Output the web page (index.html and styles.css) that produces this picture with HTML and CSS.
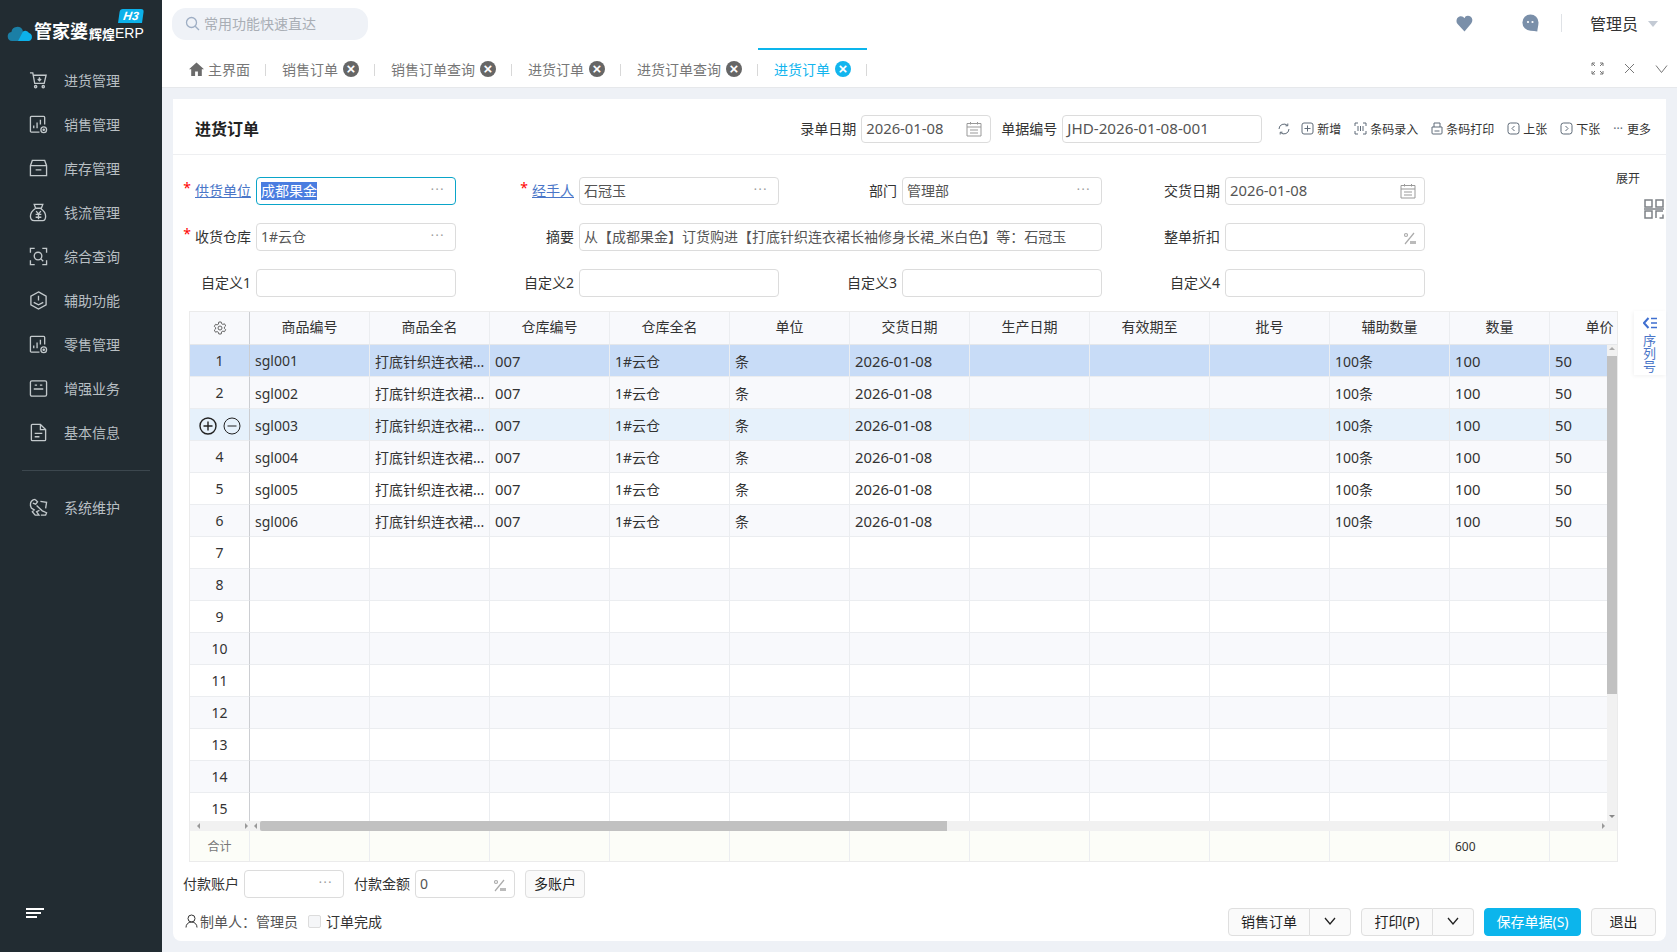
FILE: index.html
```html
<!DOCTYPE html>
<html lang="zh">
<head>
    <meta charset="utf-8">
    <title>进货订单</title>
    <link rel="stylesheet" href="styles.css">
</head>
<body>
<div class="app">
    <aside class="sidebar">
        <div class="logo">
            <svg class="logo-cloud" width="26" height="17" viewBox="0 0 26 17"><path fill="#1b7fa6" d="M5 17a4.6 4.6 0 0 1-.6-9.1A6 6 0 0 1 15.6 6l2 11z"/><path fill="#0cb1ea" d="M11 17l5-9.5a4.2 4.2 0 0 1 6 1.500A4.200 4.200 0 0 1 22 17z"/></svg>
            <span class="logo-name">管家婆</span>
            <span class="logo-sub">辉煌</span>
            <span class="logo-erp">ERP</span>
            <span class="logo-badge">H3</span>
        </div>
        <ul class="menu">
            <li><svg viewBox="0 0 20 20"><path d="M1 2h3l2 11h10l2-8.500H5"/><path d="M11 6.500v3.500M9.200 8.500l1.800 1.800 1.800-1.800"/><circle cx="7" cy="16.500" r="1.200"/><circle cx="15" cy="16.500" r="1.200"/></svg>进货管理</li>
            <li><svg viewBox="0 0 20 20"><path d="M11 18H2.500a1 1 0 0 1-1-1V2.500a1 1 0 0 1 1-1h13a1 1 0 0 1 1 1V10"/><path d="M5 14v-3M8.500 14V8M12 10V5"/><circle cx="15.500" cy="15.500" r="3"/><circle cx="15.500" cy="15.500" r=".7"/></svg>销售管理</li>
            <li><svg viewBox="0 0 20 20"><path d="M1.500 7l2-5.500h13l2 5.500v10.500h-17zM1.500 7h17M7 11.500h6"/></svg>库存管理</li>
            <li><svg viewBox="0 0 20 20"><path d="M7 5.500L5.500 1.500h9L13 5.500M7 5.500h6M7 5.500c-3 2-5.500 5.500-5.500 8.500 0 3 2 4.500 4 4.500h9c2 0 3-1.500 3-4.500 0-3-2.500-6.500-5.500-8.500"/><path d="M7.500 8.500l2.500 3 2.500-3M7 12h6M7 15h6M10 11.500V17"/></svg>钱流管理</li>
            <li><svg viewBox="0 0 20 20"><path d="M1.500 6V1.500H6M14 1.500h4.500V6M18.500 14v4.500H14M6 18.500H1.500V14"/><circle cx="9.500" cy="9.500" r="4"/><path d="M12.500 12.500l2.500 2.500"/></svg>综合查询</li>
            <li><svg viewBox="0 0 20 20"><path d="M10 1l8 4.500v9L10 19l-8-4.500v-9z"/><path d="M5 12l5 2.500 5-2.500M10 5v5"/></svg>辅助功能</li>
            <li><svg viewBox="0 0 20 20"><path d="M11 18H2.500a1 1 0 0 1-1-1V2.500a1 1 0 0 1 1-1h13a1 1 0 0 1 1 1V10"/><path d="M5 14v-3M8.500 14V8M12 10V5"/><circle cx="15.500" cy="15.500" r="3"/><circle cx="15.500" cy="15.500" r=".7"/></svg>零售管理</li>
            <li><svg viewBox="0 0 20 20"><rect x="1.500" y="2" width="17" height="16" rx="1.500"/><path d="M6 6.500h2.500M11.500 6.500H14M5 10.500h10"/></svg>增强业务</li>
            <li><svg viewBox="0 0 20 20"><path d="M12 1.500H3.500a1 1 0 0 0-1 1v15a1 1 0 0 0 1 1h13a1 1 0 0 0 1-1V7z"/><path d="M12 1.500V7h5.500M6 11h8M6 14.500h5"/></svg>基本信息</li>
        </ul>
        <div class="menu-line"></div>
        <ul class="menu">
            <li><svg viewBox="0 0 20 20"><path d="M6.500 1.500a5 5 0 0 0-4.800 6.200L1.500 8l1 2.500 3 2-2 2 3 3.500h4l-2.500-3.500 3-1.500"/><path d="M6.500 1.500L9 4 7 6.500 4 5.500M8 8l6 5.500 4.500 2-1 2.500h-5"/><path d="M12 3.500l6.500 1-1 6.500"/></svg>系统维护</li>
        </ul>
        <div class="menu-toggle"><span class="t1"></span><span class="t2"></span><span class="t3"></span></div>
    </aside>

    <main class="main">
        <header class="topbar">
            <div class="search">
                <svg width="15" height="15" viewBox="0 0 15 15"><circle cx="6.500" cy="6.500" r="5" fill="none" stroke="#9eaec4" stroke-width="1.300"/><path d="M10.200 10.200L14 14" stroke="#9eaec4" stroke-width="1.300"/></svg>
                <span>常用功能快速直达</span>
            </div>
            <div class="top-right">
                <svg class="top-heart" width="19" height="17" viewBox="0 0 18 18"><path fill="#7a8fa9" d="M9 17.500L1.700 9.500C-.5 7 .5 2 4.500 1.300 6.500 1 8 2 9 3.500l1-2c2-1.500 7-1 7.300 3.500.1 2-1 3.800-2.300 5.300z"/></svg>
                <svg class="top-chat" width="17" height="18" viewBox="0 0 17 18"><path fill="#7a8fa9" d="M8.500 0.500a8 8 0 0 1 8 8c0 3-1 6-1.200 9-2-.5-4.300-.8-6.800-.8a8.100 8.100 0 0 1 0-16.200z"/><circle cx="6" cy="8" r="1.100" fill="#fff"/><circle cx="10.500" cy="8" r="1.100" fill="#fff"/></svg>
                <span class="top-sep"></span>
                <span class="top-user">管理员</span>
                <span class="top-caret"></span>
            </div>
        </header>

        <nav class="tabs">
            <div class="tab"><svg class="home" width="15" height="14" viewBox="0 0 15 14"><path fill="#6b6b6b" d="M7.500.5L0 7.300h2.200V14h3.900V9.500h2.800V14h3.900V7.300H15z"/></svg>主界面</div>
            <div class="tab">销售订单<i class="tab-x">×</i></div>
            <div class="tab">销售订单查询<i class="tab-x">×</i></div>
            <div class="tab">进货订单<i class="tab-x">×</i></div>
            <div class="tab">进货订单查询<i class="tab-x">×</i></div>
            <div class="tab active">进货订单<i class="tab-x">×</i></div>
            <div class="tab-tools">
                <svg width="13" height="13" viewBox="0 0 13 13"><path d="M1 4V1h3M9 1h3v3M12 9v3H9M4 12H1V9M1 1l3 3M12 1L9 4M12 12L9 9M1 12l3-3"/></svg>
                <svg width="13" height="13" viewBox="0 0 13 13"><path d="M2 2l9 9M11 2l-9 9"/></svg>
                <svg width="13" height="13" viewBox="0 0 13 13"><path d="M1 3.500l5.500 7 5.500-7"/></svg>
            </div>
        </nav>

        <div class="content">
            <section class="card">
                <div class="card-head">
                    <h1 class="card-title">进货订单</h1>
                    <div class="head-fields">
                        <label class="lbl">录单日期</label>
                        <div class="ipt ipt-date">2026-01-08<svg class="ipt-icon" width="16" height="16" viewBox="0 0 16 16"><path d="M1 2.500h14v12.500H1zM1 6h14M4.500 1v2.500M11.500 1v2.500M4 9h8M4 12h8"/></svg></div>
                        <label class="lbl lbl-no">单据编号</label>
                        <div class="ipt ipt-no">JHD-2026-01-08-001</div>
                    </div>
                    <div class="tools">
                        <svg class="tool-refresh" width="12" height="12" viewBox="0 0 12 12"><path d="M1 6a5 5 0 0 1 8.500-3.500M11 6a5 5 0 0 1-8.500 3.500"/><path d="M9.800 .5v2.300H7.500M2.200 11.500V9.200h2.300"/></svg>
                        <span class="tool"><svg width="13" height="13" viewBox="0 0 13 13"><rect x="1" y="1" width="11" height="11" rx="2"/><path d="M6.500 3.500v6M3.500 6.500h6"/></svg>新增</span>
                        <span class="tool"><svg width="13" height="13" viewBox="0 0 13 13"><path d="M1 4V1h3M9 1h3v3M12 9v3H9M4 12H1V9M4 4v5M6.500 4v5M9 4v5"/></svg>条码录入</span>
                        <span class="tool"><svg width="12" height="13" viewBox="0 0 12 13"><path d="M3 5V1h6v4M1 5h10v6a1 1 0 0 1-1 1H2a1 1 0 0 1-1-1zM3.500 9h5"/></svg>条码打印</span>
                        <span class="tool"><svg width="13" height="13" viewBox="0 0 13 13"><rect x="1" y="1" width="11" height="11" rx="2.500"/><path d="M7.500 4l-2.500 2.500 2.500 2.500"/></svg>上张</span>
                        <span class="tool"><svg width="13" height="13" viewBox="0 0 13 13"><rect x="1" y="1" width="11" height="11" rx="2.500"/><path d="M5.500 4l2.500 2.500-2.500 2.500"/></svg>下张</span>
                        <span class="tool tool-more"><i>···</i>更多</span>
                    </div>
                </div>

                <div class="form">
                    <div class="field"><span class="star">*</span><a class="lbl lbl-link">供货单位</a><div class="ipt focus"><span class="sel">成都果金</span><span class="dots">···</span></div></div>
                    <div class="field"><span class="star">*</span><a class="lbl lbl-link">经手人</a><div class="ipt">石冠玉<span class="dots">···</span></div></div>
                    <div class="field"><label class="lbl">部门</label><div class="ipt">管理部<span class="dots">···</span></div></div>
                    <div class="field"><label class="lbl">交货日期</label><div class="ipt ipt-date2">2026-01-08<svg class="ipt-icon" width="16" height="16" viewBox="0 0 16 16"><path d="M1 2.500h14v12.500H1zM1 6h14M4.500 1v2.500M11.500 1v2.500M4 9h8M4 12h8"/></svg></div></div>

                    <div class="field"><span class="star">*</span><label class="lbl">收货仓库</label><div class="ipt">1#云仓<span class="dots">···</span></div></div>
                    <div class="field field-wide"><label class="lbl">摘要</label><div class="ipt">从【成都果金】订货购进【打底针织连衣裙长袖修身长裙_米白色】等：石冠玉</div></div>
                    <div class="field"><label class="lbl">整单折扣</label><div class="ipt"><svg class="pct" width="13" height="13" viewBox="0 0 13 13"><path d="M11 1L2 12"/><circle cx="3" cy="3" r="1.500"/><path class="pct-bar" d="M7 9h6v3H7z"/></svg></div></div>

                    <div class="field"><label class="lbl">自定义1</label><div class="ipt"></div></div>
                    <div class="field"><label class="lbl">自定义2</label><div class="ipt"></div></div>
                    <div class="field"><label class="lbl">自定义3</label><div class="ipt"></div></div>
                    <div class="field"><label class="lbl">自定义4</label><div class="ipt"></div></div>
                </div>

                <div class="expand">展开</div>
                <svg class="qr" width="20" height="20" viewBox="0 0 20 20"><path d="M1 1h7v7H1zM12 1h7v7h-7zM1 12h7v7H1zM12 19v-7h7M19 15.500V19h-3.500M0 10h20"/></svg>

                <div class="side-tab">
                    <svg width="14" height="12" viewBox="0 0 14 12"><path d="M5.500 1L1 6l4.500 5" stroke-width="2"/><path d="M8 1.500h6M8 6h6M8 10.500h6" stroke-width="1.600"/></svg>
                    <span>序列号</span>
                </div>

                <div class="grid">
                    <div class="grid-view">
                        <table class="tb">
                            <colgroup><col class="c0"><col class="c1"><col class="c1"><col class="c1"><col class="c1"><col class="c1"><col class="c1"><col class="c1"><col class="c1"><col class="c1"><col class="c1"><col class="c2"><col class="c2"></colgroup>
                            <thead>
                                <tr><th><svg class="gear" width="14" height="14" viewBox="0 0 14 14"><path d="M5.800 1h2.400l.4 1.700 1.300.7 1.600-.6 1.200 2.100-1.300 1.100v1.500l1.300 1.100-1.200 2.100-1.600-.6-1.300.7L8.200 13H5.800l-.4-1.700-1.300-.7-1.600.6L1.300 9.100l1.300-1.100V6.500L1.300 5.400l1.200-2.100 1.600.6 1.300-.7z"/><circle cx="7" cy="7" r="2"/></svg></th><th>商品编号</th><th>商品全名</th><th>仓库编号</th><th>仓库全名</th><th>单位</th><th>交货日期</th><th>生产日期</th><th>有效期至</th><th>批号</th><th>辅助数量</th><th>数量</th><th>单价</th></tr>
                            </thead>
                            <tbody>
                                <tr class="selected"><td>1</td><td>sgl001</td><td>打底针织连衣裙...</td><td>007</td><td>1#云仓</td><td>条</td><td>2026-01-08</td><td></td><td></td><td></td><td>100条</td><td>100</td><td>50</td></tr>
                                <tr><td>2</td><td>sgl002</td><td>打底针织连衣裙...</td><td>007</td><td>1#云仓</td><td>条</td><td>2026-01-08</td><td></td><td></td><td></td><td>100条</td><td>100</td><td>50</td></tr>
                                <tr class="hover"><td class="row-ops"><svg width="18" height="18" viewBox="0 0 18 18"><circle cx="9" cy="9" r="8"/><path d="M9 4.500v9M4.500 9h9"/></svg><svg class="minus" width="18" height="18" viewBox="0 0 18 18"><circle cx="9" cy="9" r="8"/><path d="M4.500 9h9"/></svg></td><td>sgl003</td><td>打底针织连衣裙...</td><td>007</td><td>1#云仓</td><td>条</td><td>2026-01-08</td><td></td><td></td><td></td><td>100条</td><td>100</td><td>50</td></tr>
                                <tr><td>4</td><td>sgl004</td><td>打底针织连衣裙...</td><td>007</td><td>1#云仓</td><td>条</td><td>2026-01-08</td><td></td><td></td><td></td><td>100条</td><td>100</td><td>50</td></tr>
                                <tr><td>5</td><td>sgl005</td><td>打底针织连衣裙...</td><td>007</td><td>1#云仓</td><td>条</td><td>2026-01-08</td><td></td><td></td><td></td><td>100条</td><td>100</td><td>50</td></tr>
                                <tr><td>6</td><td>sgl006</td><td>打底针织连衣裙...</td><td>007</td><td>1#云仓</td><td>条</td><td>2026-01-08</td><td></td><td></td><td></td><td>100条</td><td>100</td><td>50</td></tr>
                                <tr><td>7</td><td></td><td></td><td></td><td></td><td></td><td></td><td></td><td></td><td></td><td></td><td></td><td></td></tr>
                                <tr><td>8</td><td></td><td></td><td></td><td></td><td></td><td></td><td></td><td></td><td></td><td></td><td></td><td></td></tr>
                                <tr><td>9</td><td></td><td></td><td></td><td></td><td></td><td></td><td></td><td></td><td></td><td></td><td></td><td></td></tr>
                                <tr><td>10</td><td></td><td></td><td></td><td></td><td></td><td></td><td></td><td></td><td></td><td></td><td></td><td></td></tr>
                                <tr><td>11</td><td></td><td></td><td></td><td></td><td></td><td></td><td></td><td></td><td></td><td></td><td></td><td></td></tr>
                                <tr><td>12</td><td></td><td></td><td></td><td></td><td></td><td></td><td></td><td></td><td></td><td></td><td></td><td></td></tr>
                                <tr><td>13</td><td></td><td></td><td></td><td></td><td></td><td></td><td></td><td></td><td></td><td></td><td></td><td></td></tr>
                                <tr><td>14</td><td></td><td></td><td></td><td></td><td></td><td></td><td></td><td></td><td></td><td></td><td></td><td></td></tr>
                                <tr><td>15</td><td></td><td></td><td></td><td></td><td></td><td></td><td></td><td></td><td></td><td></td><td></td><td></td></tr>
                            </tbody>
                        </table>
                        <div class="vbar"><i class="arrow-up"></i><b></b><i class="arrow-down"></i></div>
                    </div>
                    <div class="hbar">
                        <div class="hbar-fixed"><i class="arrow-left"></i><i class="arrow-right"></i></div>
                        <i class="arrow-left"></i>
                        <b></b>
                        <i class="arrow-right end"></i>
                    </div>
                    <div class="sum-view">
                        <table class="tb tb-sum">
                            <colgroup><col class="c0"><col class="c1"><col class="c1"><col class="c1"><col class="c1"><col class="c1"><col class="c1"><col class="c1"><col class="c1"><col class="c1"><col class="c1"><col class="c2"><col class="c2"></colgroup>
                            <tbody>
                                <tr><td>合计</td><td></td><td></td><td></td><td></td><td></td><td></td><td></td><td></td><td></td><td></td><td>600</td><td></td></tr>
                            </tbody>
                        </table>
                    </div>
                </div>

                <div class="pay-row">
                    <label class="lbl">付款账户</label>
                    <div class="ipt ipt-pay"><span class="dots">···</span></div>
                    <label class="lbl pay-amount">付款金额</label>
                    <div class="ipt ipt-pay">0<svg class="pct" width="13" height="13" viewBox="0 0 13 13"><path d="M11 1L2 12"/><circle cx="3" cy="3" r="1.500"/><path class="pct-bar" d="M7 9h6v3H7z"/></svg></div>
                    <button class="btn btn-multi">多账户</button>
                </div>

                <div class="foot-row">
                    <div class="foot-left">
                        <svg width="13" height="14" viewBox="0 0 13 14"><circle cx="6.500" cy="4.500" r="3.500"/><path d="M1 13.500c0-3 2-5.500 5.500-5.500s5.500 2.500 5.500 5.500"/></svg>
                        <span class="maker">制单人：</span><span class="maker">管理员</span>
                        <span class="check"></span><span>订单完成</span>
                    </div>
                    <div class="foot-right">
                        <div class="btn-group"><button class="btn btn-main w81">销售订单</button><button class="btn btn-arrow w41"><svg width="12" height="8" viewBox="0 0 12 8"><path d="M1 1l5 6 5-6"/></svg></button></div>
                        <div class="btn-group"><button class="btn btn-main w71">打印(P)</button><button class="btn btn-arrow w41"><svg width="12" height="8" viewBox="0 0 12 8"><path d="M1 1l5 6 5-6"/></svg></button></div>
                        <button class="btn btn-save">保存单据(S)</button>
                        <button class="btn btn-exit">退出</button>
                    </div>
                </div>
            </section>
        </div>
    </main>
</div>
</body>
</html>
```

FILE: styles.css
```css
* {
    box-sizing: border-box;
}
html, body {
    margin: 0;
    padding: 0;
    height: 952px;
    overflow: hidden;
}
body {
    font-family: "Noto Sans", "Noto Sans CJK SC", sans-serif;
    font-size: 14px;
    color: #333;
    background: #eef1f6;
}
ul {
    list-style: none;
    margin: 0;
    padding: 0;
}
.app {
    display: flex;
    height: 952px;
}

/* sidebar */
.sidebar {
    width: 162px;
    flex: none;
    display: flex;
    flex-direction: column;
    background: #222c32;
    color: #b8bfc3;
}
.logo {
    height: 59px;
    position: relative;
    display: flex;
    align-items: center;
    padding: 3px 0 0 7px;
    color: #fff;
    white-space: nowrap;
}
.logo-cloud {
    margin-top: 3px;
    margin-right: 1px;
}
.logo-name {
    font-size: 18px;
    font-weight: 700;
    line-height: 1;
}
.logo-sub {
    font-size: 13px;
    font-weight: 700;
    margin-left: 1px;
    margin-top: 4px;
}
.logo-erp {
    font-family: "Liberation Sans", sans-serif;
    font-size: 14px;
    margin-top: 4px;
}
.logo-badge {
    position: absolute;
    left: 119px;
    top: 9px;
    width: 24px;
    height: 14px;
    background: #0cb1ea;
    color: #fff;
    font: italic 700 12px/14px "Liberation Sans", sans-serif;
    text-align: center;
    border-radius: 3px 3px 0 0;
    transform: skewX(-8deg);
}
.menu li {
    height: 44px;
    display: flex;
    align-items: center;
    padding: 0 0 2px 29px;
    font-size: 14px;
}
.menu svg {
    width: 19px;
    height: 19px;
    margin-right: 16px;
    fill: none;
    stroke: #c3c9cc;
    stroke-width: 1.4;
}
.menu-line {
    height: 1px;
    margin: 15px 12px 15px 22px;
    background: #3c474e;
}
.menu-toggle {
    margin-top: auto;
    padding: 0 0 34px 26px;
}
.menu-toggle span {
    display: block;
    height: 2px;
    margin-top: 2px;
    background: #fff;
}
.menu-toggle .t1 { width: 18px; }
.menu-toggle .t2 { width: 15px; }
.menu-toggle .t3 { width: 11px; }

/* top area */
.main {
    flex: 1;
    min-width: 0;
    display: flex;
    flex-direction: column;
}
.topbar {
    height: 44px;
    display: flex;
    align-items: flex-start;
    background: #fff;
    padding: 8px 0 0 10px;
}
.search {
    width: 196px;
    height: 32px;
    display: flex;
    align-items: center;
    gap: 4px;
    padding: 0 0 2px 13px;
    background: #eff2f7;
    border-radius: 14px;
    color: #a9aeb5;
}
.top-right {
    margin-left: auto;
    display: flex;
    align-items: center;
    height: 32px;
    padding: 0 19px 2px 0;
    color: #333;
}
.top-heart {
    margin-right: 48px;
}
.top-chat {
    margin-right: 22px;
}
.top-sep {
    width: 1px;
    height: 18px;
    margin-right: 28px;
    background: #dfe2e6;
}
.top-user {
    font-size: 16px;
}
.top-caret {
    width: 0;
    height: 0;
    margin-left: 10px;
    margin-top: 1px;
    border-left: 5px solid transparent;
    border-right: 5px solid transparent;
    border-top: 6px solid #c3cad4;
}

.tabs {
    height: 44px;
    display: flex;
    align-items: center;
    padding: 0 0 0 10px;
    background: #fff;
    border-bottom: 1px solid #e6e8eb;
    color: #777;
    white-space: nowrap;
}
.tab {
    position: relative;
    height: 38px;
    margin-top: 6px;
    display: flex;
    align-items: center;
    padding: 0 16px 0 16px;
}
.tab::after {
    content: "";
    position: absolute;
    right: 0;
    top: 14px;
    width: 1px;
    height: 12px;
    background: #d8d8d8;
}
.home {
    margin: 0 4px 0 1px;
}
.tab-x {
    width: 16px;
    height: 16px;
    margin: 0 0 0 5px;
    border-radius: 50%;
    background: #666;
    color: #fff;
    font: 700 15px/15px "Liberation Sans", sans-serif;
    text-align: center;
}
.tab.active {
    color: #12b5ee;
}
.tab.active::before {
    content: "";
    position: absolute;
    left: 0;
    right: 0;
    top: -2px;
    height: 2px;
    background: #0cb5ec;
}
.tab.active .tab-x {
    background: #12b5ee;
}
.tab-tools {
    margin-left: auto;
    display: flex;
    gap: 19px;
    padding-right: 9px;
    margin-top: 6px;
}
.tab-tools svg {
    fill: none;
    stroke: #777;
    stroke-width: 1;
}

/* card */
.content {
    flex: 1;
    padding: 11px;
    min-height: 0;
}
.card {
    position: relative;
    height: 100%;
    background: #fff;
    border-radius: 0 0 8px 8px;
    display: flex;
    flex-direction: column;
}
.card-head {
    height: 56px;
    flex: none;
    display: flex;
    align-items: center;
    padding: 4px 15px 0 22px;
    border-bottom: 1px solid #eeeff1;
}
.card-title {
    margin: 0;
    font-size: 16px;
    font-weight: 700;
    color: #222;
    padding-bottom: 2px;
}
.head-fields {
    margin-left: auto;
    display: flex;
    align-items: center;
}
.lbl {
    color: #333;
    white-space: nowrap;
    padding-bottom: 2px;
}
.ipt {
    position: relative;
    height: 28px;
    width: 200px;
    flex: none;
    display: flex;
    align-items: center;
    padding: 0 4px 2px 4px;
    border: 1px solid #dcdcdc;
    border-radius: 4px;
    background: #fff;
    color: #555;
    white-space: nowrap;
    overflow: hidden;
}
.head-fields .lbl { margin-right: 5px; }
.ipt-date { width: 130px; font-size: 14.8px; }
.ipt-date2 { font-size: 14.8px; }
.ipt-no { font-size: 15.2px; padding-bottom: 1px; }
.lbl-no { margin-left: 10px; }
.ipt-icon {
    position: absolute;
    right: 8px;
    top: 5px;
    fill: none;
    stroke: #999;
    stroke-width: 1;
}
.tools {
    display: flex;
    align-items: center;
    margin-left: 16px;
    font-size: 12px;
    color: #333;
}
.tools svg {
    fill: none;
    stroke: #5f6b78;
    stroke-width: 1;
}
.tool-refresh {
    margin-right: 11px;
}
.tool {
    display: flex;
    align-items: center;
    gap: 3px;
    margin-right: 13px;
}
.tool-more {
    margin-right: 0;
    gap: 4px;
}
.tool-more i {
    font-style: normal;
    color: #5f6b78;
}

/* form */
.form {
    flex: none;
    display: grid;
    grid-template-columns: repeat(4, 323px);
    row-gap: 18px;
    padding-top: 22px;
}
.field {
    display: flex;
    align-items: center;
    justify-content: flex-end;
    padding-right: 40px;
    height: 28px;
}
.field-wide {
    grid-column: span 2;
}
.field-wide .ipt {
    flex: 0 0 523px;
    width: 523px;
}
.field .lbl {
    margin-right: 5px;
}
.star {
    color: #f00;
    font-size: 14px;
    line-height: 1;
    margin-right: 4px;
    margin-top: -7px;
}
.lbl-link {
    color: #4a76c8;
    text-decoration: underline;
}
.ipt.focus {
    border-color: #0aa5c9;
    padding-bottom: 0;
}
.sel {
    background: #4a7de0;
    color: #fff;
    line-height: 18px;
}
.dots {
    position: absolute;
    right: 10px;
    top: 3px;
    color: #999;
    font-size: 12px;
    letter-spacing: 1.5px;
}
.pct {
    position: absolute;
    right: 8px;
    top: 8px;
    fill: none;
    stroke: #aaa;
    stroke-width: 1.200;
}
.pct .pct-bar {
    fill: #bbb;
    stroke: none;
}
.expand {
    position: absolute;
    left: 1443px;
    top: 70px;
    font-size: 12px;
    color: #333;
}
.qr {
    position: absolute;
    left: 1471px;
    top: 100px;
    fill: none;
    stroke: #7d8186;
    stroke-width: 1.500;
}
.side-tab {
    position: absolute;
    left: 1461px;
    top: 212px;
    width: 32px;
    height: 64px;
    padding-top: 6px;
    display: flex;
    flex-direction: column;
    align-items: center;
    background: #fff;
    box-shadow: -1px 1px 4px rgba(0, 0, 0, 0.06);
    color: #4a76c8;
}
.side-tab svg {
    fill: none;
    stroke: #3f6fd0;
}
.side-tab span {
    width: 14px;
    margin-top: 5px;
    font-size: 13px;
    line-height: 13px;
}

/* table */
.grid {
    flex: none;
    width: 1429px;
    height: 551px;
    margin: 14px 0 0 16px;
    border: 1px solid #ebebeb;
}
.grid-view {
    position: relative;
    height: 509px;
    overflow: hidden;
}
.tb {
    width: 1460px;
    table-layout: fixed;
    border-collapse: separate;
    border-spacing: 0;
}
.c0 { width: 60px; }
.c1 { width: 120px; }
.c2 { width: 100px; }
.tb th, .tb td {
    box-sizing: border-box;
    height: 32px;
    padding: 0 5px 0 5px;
    border-right: 1px solid #ebedf0;
    border-bottom: 1px solid #ebedf0;
    font-weight: 400;
    white-space: nowrap;
    overflow: hidden;
}
.tb th {
    height: 33px;
    background: #f8f9fc;
    text-align: center;
    border-bottom-color: #e5e7ea;
    padding-bottom: 4px;
}
.tb tr > :first-child {
    text-align: center;
    border-right: 1px solid #ccced2;
    padding: 0;
}
.tb tbody tr:nth-child(even) td {
    background: #f8f9fc;
}
.tb tbody tr.selected td {
    background: #c8dcf7;
}
.tb tbody tr.hover td {
    background: #e6f1fb;
}
/* digits come out a bit wider in the reference */
.grid-view tbody td:nth-child(4),
.grid-view tbody td:nth-child(7),
.grid-view tbody td:nth-child(12),
.grid-view tbody td:nth-child(13) {
    font-size: 14.8px;
    padding-top: 1px;
}
.grid-view tbody td:nth-child(2) {
    padding-top: 2px;
}
.grid-view tbody tr.selected td:nth-child(2) {
    padding-top: 0;
}
.gear {
    display: block;
    margin: auto;
    fill: none;
    stroke: #666;
    stroke-width: 1;
}
.row-ops svg {
    vertical-align: middle;
    fill: none;
    stroke: #222;
    stroke-width: 1.400;
}
.row-ops .minus {
    margin-left: 6px;
    stroke-width: 1;
}
.vbar {
    position: absolute;
    right: 0;
    top: 33px;
    bottom: 0;
    width: 10px;
    background: #f1f1f1;
    display: flex;
    flex-direction: column;
    align-items: center;
}
.vbar b {
    display: block;
    width: 10px;
    height: 338px;
    margin-top: 6px;
    background: #c1c1c1;
}
.vbar i { flex: none; }
.arrow-up, .arrow-down {
    width: 0;
    height: 0;
    border-left: 3px solid transparent;
    border-right: 3px solid transparent;
}
.arrow-up {
    margin-top: 2px;
    border-bottom: 3px solid #aaa;
}
.arrow-down {
    margin-top: auto;
    margin-bottom: 3px;
    border-top: 3px solid #888;
}
.hbar {
    height: 10px;
    display: flex;
    align-items: center;
    background: #f1f1f1;
}
.hbar-fixed {
    width: 60px;
    flex: none;
    display: flex;
    justify-content: space-between;
    padding: 0 2px 0 3px;
}
.hbar b {
    display: block;
    width: 687px;
    height: 10px;
    margin-left: 3px;
    background: #c1c1c1;
    border-radius: 2px 0 0 2px;
}
.hbar i {
    display: block;
    width: 0;
    height: 0;
    margin-left: 4px;
    border-top: 3px solid transparent;
    border-bottom: 3px solid transparent;
}
.arrow-left {
    border-right: 3px solid #999;
}
.arrow-right {
    border-left: 3px solid #999;
}
.hbar .end {
    margin-left: auto;
    margin-right: 12px;
}
.sum-view {
    height: 30px;
    overflow: hidden;
}
.tb-sum td {
    height: 30px;
    background: #fcfdf8;
    font-size: 12px;
    border-bottom: 0;
    color: #333;
}
.tb-sum tr > :first-child {
    color: #777;
    border-right-color: #ebedf0;
}

/* footer */
.pay-row {
    flex: none;
    display: flex;
    align-items: center;
    height: 28px;
    margin-top: 8px;
    padding-left: 10px;
}
.pay-row .lbl {
    margin-right: 5px;
}
.ipt-pay {
    width: 100px;
}
.pay-amount {
    margin-left: 10px;
}
.btn {
    height: 28px;
    padding: 0 0 2px 0;
    font: inherit;
    color: #222;
    background: #fafafa;
    border: 1px solid #dfdfdf;
    border-radius: 4px;
}
.btn-multi {
    width: 60px;
    margin-left: 10px;
}
.foot-row {
    flex: none;
    display: flex;
    align-items: center;
    justify-content: space-between;
    height: 28px;
    margin-top: 10px;
    padding: 0 10px 0 12px;
}
.foot-left {
    display: flex;
    align-items: center;
    color: #333;
    padding-bottom: 2px;
}
.foot-left svg {
    margin-right: 2px;
    fill: none;
    stroke: #333;
    stroke-width: 1;
}
.maker {
    color: #555;
}
.check {
    width: 13px;
    height: 13px;
    margin: 0 5px 0 10px;
    background: #f5f6f8;
    border: 1px solid #dcdcdc;
    border-radius: 2px;
}
.foot-right {
    display: flex;
    gap: 10px;
}
.btn-group {
    display: flex;
}
.btn-main {
    border-radius: 4px 0 0 4px;
}
.btn-arrow {
    border-left: 0;
    border-radius: 0 4px 4px 0;
}
.btn-arrow svg {
    display: block;
    margin: auto;
    fill: none;
    stroke: #222;
    stroke-width: 1.300;
}
.w81 { width: 82px; }
.w71 { width: 72px; }
.w41 { width: 41px; }
.btn-save {
    width: 97px;
    background: #0cb5ec;
    border-color: #0cb5ec;
    color: #fff;
}
.btn-exit {
    width: 65px;
}
```
